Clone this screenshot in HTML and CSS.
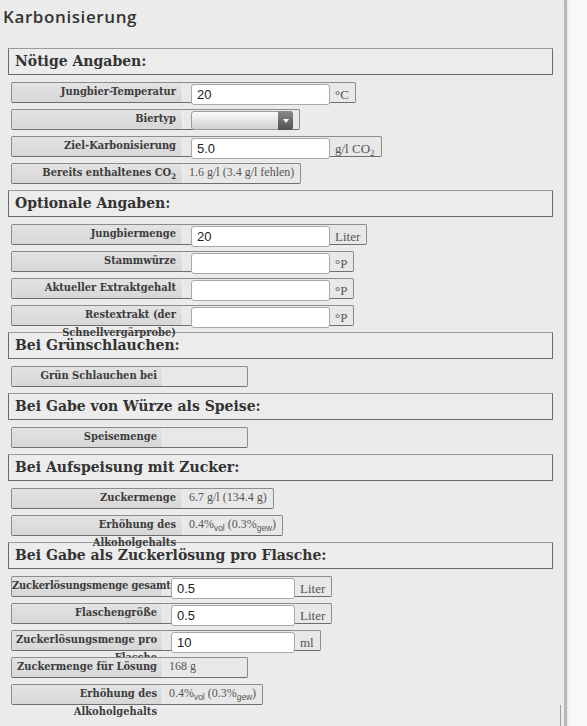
FILE: index.html
```html
<!DOCTYPE html>
<html lang="de">
<head>
<meta charset="utf-8">
<title>Karbonisierung</title>
<link rel="stylesheet" href="styles.css">
</head>
<body>
<div class="page">
  <h1 class="title">Karbonisierung</h1>

  <section class="group wide">
    <h2 class="group-head">Nötige Angaben:</h2>
    <div class="row">
      <div class="label">Jungbier-Temperatur</div>
      <div class="value"><input class="field" type="text" value="20"><span class="unit">°C</span></div>
    </div>
    <div class="row">
      <div class="label">Biertyp</div>
      <div class="value">
        <span class="select-wrap"><select class="select"><option></option></select><span class="select-arrow"><svg width="6" height="4" viewBox="0 0 6 4"><path d="M0 0H6L3 4Z" fill="#fff"/></svg></span></span>
      </div>
    </div>
    <div class="row">
      <div class="label">Ziel-Karbonisierung</div>
      <div class="value"><input class="field" type="text" value="5.0"><span class="unit">g/l CO<sub>2</sub></span></div>
    </div>
    <div class="row">
      <div class="label">Bereits enthaltenes CO<sub>2</sub></div>
      <div class="value text">1.6 g/l (3.4 g/l fehlen)</div>
    </div>
  </section>

  <section class="group wide">
    <h2 class="group-head">Optionale Angaben:</h2>
    <div class="row">
      <div class="label">Jungbiermenge</div>
      <div class="value"><input class="field" type="text" value="20"><span class="unit">Liter</span></div>
    </div>
    <div class="row">
      <div class="label">Stammwürze</div>
      <div class="value"><input class="field" type="text" value=""><span class="unit">°P</span></div>
    </div>
    <div class="row">
      <div class="label">Aktueller Extraktgehalt</div>
      <div class="value"><input class="field" type="text" value=""><span class="unit">°P</span></div>
    </div>
    <div class="row">
      <div class="label">Restextrakt (der Schnellvergärprobe)</div>
      <div class="value"><input class="field" type="text" value=""><span class="unit">°P</span></div>
    </div>
  </section>

  <section class="group narrow">
    <h2 class="group-head">Bei Grünschlauchen:</h2>
    <div class="row">
      <div class="label">Grün Schlauchen bei</div>
      <div class="value text"></div>
    </div>
  </section>

  <section class="group narrow">
    <h2 class="group-head">Bei Gabe von Würze als Speise:</h2>
    <div class="row">
      <div class="label">Speisemenge</div>
      <div class="value text"></div>
    </div>
  </section>

  <section class="group wide">
    <h2 class="group-head">Bei Aufspeisung mit Zucker:</h2>
    <div class="row">
      <div class="label">Zuckermenge</div>
      <div class="value text">6.7 g/l (134.4 g)</div>
    </div>
    <div class="row">
      <div class="label">Erhöhung des Alkoholgehalts</div>
      <div class="value text">0.4%<sub>vol</sub> (0.3%<sub>gew</sub>)</div>
    </div>
  </section>

  <section class="group narrow last">
    <h2 class="group-head">Bei Gabe als Zuckerlösung pro Flasche:</h2>
    <div class="row">
      <div class="label tight">Zuckerlösungsmenge gesamt</div>
      <div class="value"><input class="field" type="text" value="0.5"><span class="unit">Liter</span></div>
    </div>
    <div class="row">
      <div class="label">Flaschengröße</div>
      <div class="value"><input class="field" type="text" value="0.5"><span class="unit">Liter</span></div>
    </div>
    <div class="row">
      <div class="label">Zuckerlösungsmenge pro Flasche</div>
      <div class="value"><input class="field" type="text" value="10"><span class="unit">ml</span></div>
    </div>
    <div class="row">
      <div class="label">Zuckermenge für Lösung</div>
      <div class="value text">168 g</div>
    </div>
    <div class="row">
      <div class="label">Erhöhung des Alkoholgehalts</div>
      <div class="value text">0.4%<sub>vol</sub> (0.3%<sub>gew</sub>)</div>
    </div>
  </section>

  <div class="tail"></div>
</div>
</body>
</html>
```

FILE: styles.css
```css
html, body {
  margin: 0;
  padding: 0;
}

body {
  background: #f8f8f8;
  font-family: "Liberation Serif", serif;
}

.page {
  width: 567px;
  min-height: 726px;
  box-sizing: border-box;
  background: #ebebeb;
  border-right: 3px solid #b9b9b9;
  box-shadow: 1px 0 2px rgba(0, 0, 0, 0.08);
  overflow: hidden;
}

.title {
  margin: 0 0 18px 0;
  padding: 4px 0 0 3px;
  font-family: "Open Sans", sans-serif;
  font-size: 17px;
  font-weight: 600;
  letter-spacing: 0.6px;
  line-height: 26px;
  color: #333;
}

.group {
  display: flex;
  flex-direction: column;
  align-items: flex-start;
  gap: 6px;
  margin: 0 0 6px 8px;
}

.group.last {
  margin-bottom: 0;
}

.group-head {
  width: 545px;
  height: 27px;
  box-sizing: border-box;
  margin: 0 0 1px 0;
  padding: 0 0 0 6px;
  border: 1px solid #6a6a6a;
  border-top-color: #9a9a9a;
  border-radius: 1px;
  background: #ececec;
  font-family: "DejaVu Serif", serif;
  font-weight: bold;
  font-size: 14px;
  line-height: 25px;
  color: #333;
}

.row {
  position: relative;
  z-index: 1;
  display: flex;
  height: 21px;
  box-sizing: border-box;
  margin-left: 3px;
  border: 1px solid #8c8c8c;
  border-bottom-color: #6e6e6e;
  border-radius: 2px;
  background: #e8e8e8;
}

.label {
  flex: none;
  box-sizing: border-box;
  padding: 0 6px;
  text-align: right;
  font-family: "DejaVu Serif Condensed", "DejaVu Serif", serif;
  font-stretch: condensed;
  font-weight: bold;
  font-size: 11px;
  line-height: 18px;
  color: #3c3c3c;
  background: linear-gradient(#e3e3e3, #d7d7d7);
  border-right: 1px solid #f1f1f1;
}

.wide .label {
  width: 171px;
}

.narrow .label {
  width: 151px;
  padding: 0 5px 0 3px;
}

.narrow .label.tight {
  white-space: nowrap;
  letter-spacing: -0.15px;
  padding: 0 4px 0 0;
}

.value {
  display: flex;
  align-items: baseline;
  box-sizing: border-box;
  min-width: 84px;
  padding: 1px 6px 0 6px;
}

.value.text {
  display: block;
  padding-top: 0;
  font-family: "Liberation Serif", serif;
  font-size: 12px;
  line-height: 16px;
  color: #555;
}

sub {
  font-size: 70%;
  line-height: 0;
  vertical-align: -0.35em;
}

.value.text sub {
  font-family: "Liberation Sans", sans-serif;
}

.field {
  flex: none;
  height: 21px;
  box-sizing: border-box;
  margin: 0 0 0 2px;
  padding: 0 5px;
  border: 1px solid #a8a8a8;
  border-radius: 3px;
  background: #fff;
  font-family: "Liberation Sans", sans-serif;
  font-size: 13px;
  color: #222;
}

.wide .field {
  width: 139px;
}

.narrow .field {
  width: 124px;
}

.unit {
  margin-left: 5px;
  font-family: "Liberation Serif", serif;
  font-size: 13px;
  line-height: 16px;
  color: #555;
}

.select-wrap {
  position: relative;
  display: inline-block;
  margin-left: 2px;
  width: 102px;
  height: 19px;
}

.select {
  appearance: none;
  -webkit-appearance: none;
  display: block;
  width: 102px;
  height: 19px;
  box-sizing: border-box;
  margin: 0;
  border: 1px solid #9c9c9c;
  border-radius: 3px;
  background: linear-gradient(#fbfbfb, #cfcfcf);
}

.select-arrow {
  position: absolute;
  top: 0;
  right: 0;
  width: 15px;
  height: 19px;
  box-sizing: border-box;
  display: flex;
  align-items: center;
  justify-content: center;
  border-radius: 0 3px 3px 0;
  background: linear-gradient(#8a8a8a, #505050);
}

.tail {
  margin-left: 8px;
  width: 552px;
  height: 30px;
  border-right: 1px solid #a0a0a0;
}
```
